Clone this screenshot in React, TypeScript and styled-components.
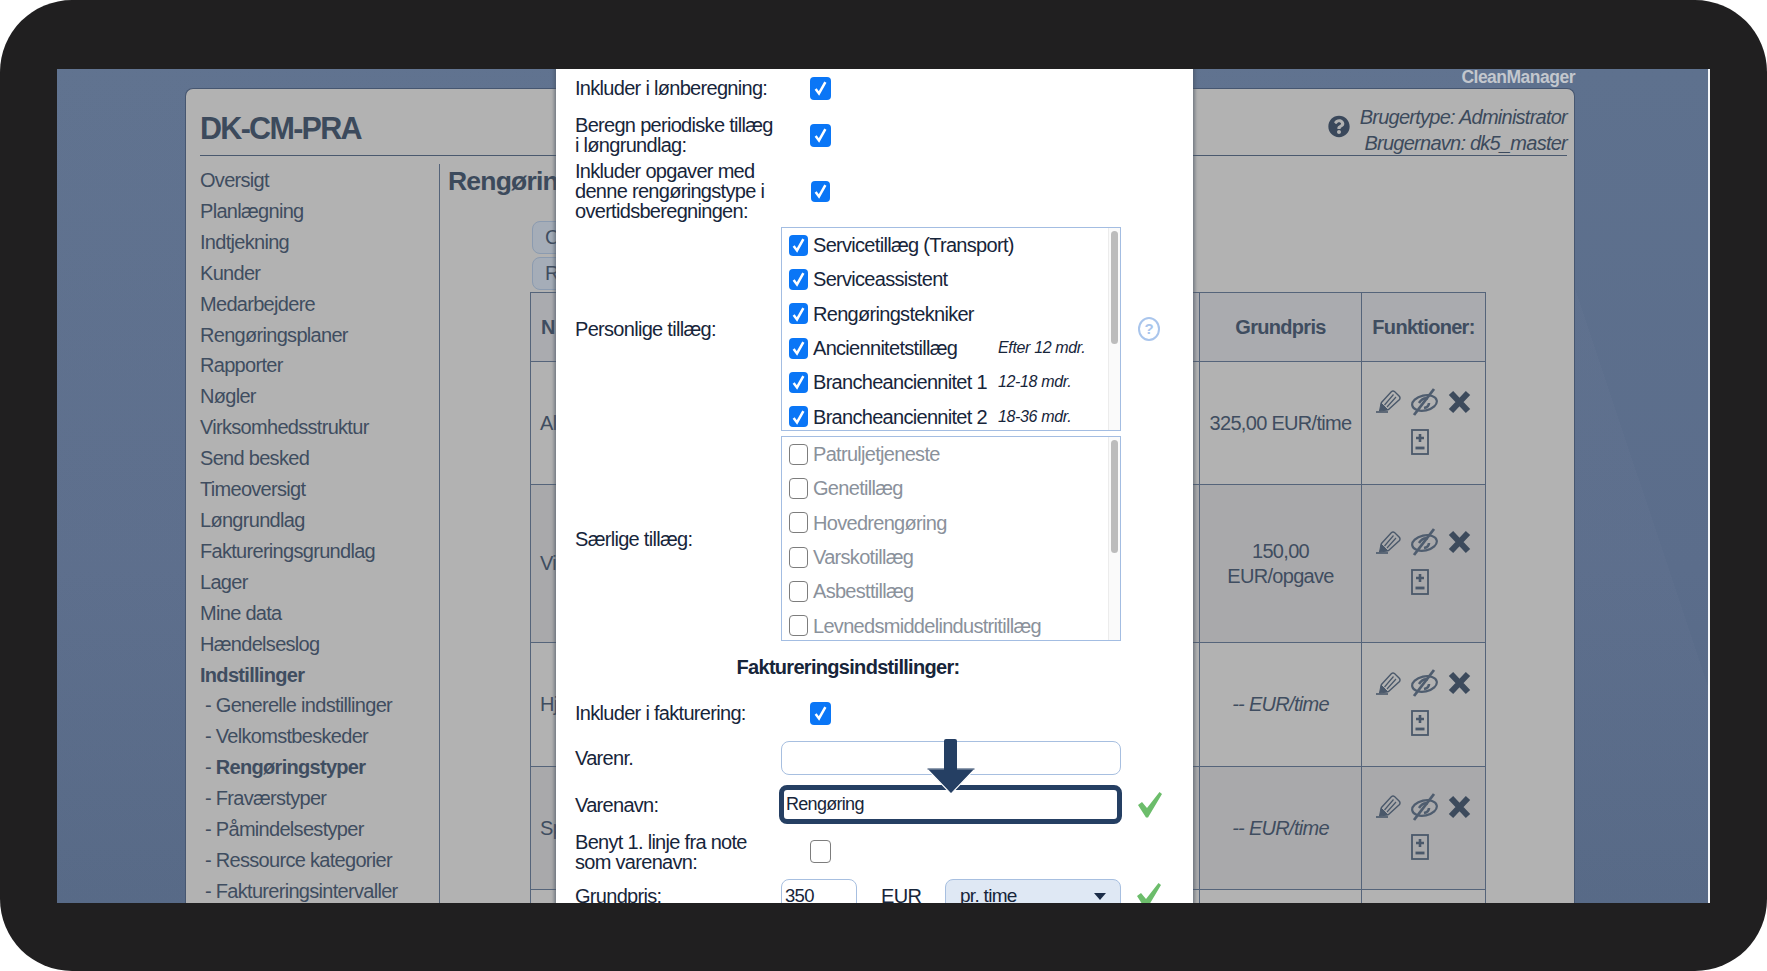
import React from 'react';
import styled, { createGlobalStyle } from 'styled-components';
import { FaQuestionCircle } from 'react-icons/fa';

const GlobalStyle = createGlobalStyle`
  html, body {
    margin: 0;
    padding: 0;
    background: #fff;
  }
  * {
    box-sizing: border-box;
  }
  body {
    font-family: "Liberation Sans", Arial, sans-serif;
    font-size: 20px;
    letter-spacing: -0.7px;
    line-height: 20px;
  }
`;

const Frame = styled.div`
  width: 1767px;
  height: 971px;
  padding: 69px 57px 68px;
  background: #201f20;
  border-radius: 72px;
  overflow: hidden;
`;

const Screen = styled.div`
  position: relative;
  height: 834px;
  overflow: hidden;
  border-right: 2px solid #f4f6f8;
  background:
    linear-gradient(71.5deg, rgba(255, 255, 255, 0.015) 0 89.3%, transparent 89.3%),
    linear-gradient(180deg, #5e718e 0%, #5b6d8b 60%, #556885 100%);
`;

const Column = styled.div`
  width: 1390px;
  margin-left: 128px;
`;

const Brand = styled.div`
  height: 19px;
  text-align: right;
  font-size: 17.5px;
  font-weight: 700;
  letter-spacing: -0.5px;
  line-height: 17px;
  color: #c3c7cd;
`;

const Panel = styled.div`
  height: 900px;
  padding: 0 7px 0 14px;
  background: #b2b2b2;
  border: 1px solid #465670;
  border-bottom: none;
  border-radius: 8px 8px 0 0;
`;

const Header = styled.header`
  display: flex;
  align-items: center;
  justify-content: space-between;
  height: 67px;
  border-bottom: 1px solid #4a596e;
`;

const SiteTitle = styled.h1`
  margin: 12px 0 0;
  font-size: 30.5px;
  letter-spacing: -1.7px;
  line-height: 34px;
  color: #3c4a5c;
`;

const UserBlock = styled.div`
  display: flex;
  align-items: center;
  gap: 10px;
  margin-top: 15px;
  color: #3c4a5c;
`;

const HelpDark = styled(FaQuestionCircle)`
  width: 22px;
  height: 23px;
  margin-top: -6px;
  color: #3a485b;
`;

const UserText = styled.div`
  text-align: right;
  font-style: italic;
  letter-spacing: -0.75px;
  line-height: 26px;
`;

const Body = styled.div`
  display: flex;
  margin-top: 9px;
`;

const Sidebar = styled.nav`
  flex: none;
  width: 240px;
  margin-top: -1px;
  padding-top: 1px;
  border-right: 1px solid #55647a;
`;

const NavItem = styled.div<{ $bold?: boolean; $sub?: boolean }>`
  height: 30.92px;
  padding-left: ${p => (p.$sub ? 5 : 0)}px;
  line-height: 31px;
  font-weight: ${p => (p.$bold ? 700 : 400)};
  color: #3f4d60;
  white-space: nowrap;
`;

const NavBold = styled.span`
  font-weight: 700;
`;

const Main = styled.main`
  flex: 1;
  padding-left: 8px;
`;

const PageTitle = styled.h2`
  margin: 0;
  height: 56px;
  font-size: 26.5px;
  letter-spacing: -0.8px;
  line-height: 32px;
  color: #3c4a5c;
`;

const TabButton = styled.div`
  width: 140px;
  height: 33px;
  margin: 0 0 3px 84px;
  padding-left: 12px;
  border: 1px solid #8b9bb0;
  border-radius: 8px;
  background: #a5adb8;
  line-height: 31px;
  color: #3f4d60;
`;

const Table = styled.table`
  width: 955px;
  margin: -1px 0 0 82px;
  table-layout: fixed;
  border-collapse: collapse;
  color: #3f4d60;
`;

const HeadCell = styled.th<{ $w: number; $left?: boolean }>`
  width: ${p => p.$w}px;
  height: 69px;
  padding: 0 ${p => (p.$left ? 10 : 0)}px;
  text-align: ${p => (p.$left ? 'left' : 'center')};
  border: 1px solid #55647a;
  background: #aaabaf;
`;

const Row = styled.tr<{ $h: number; $dark?: boolean }>`
  height: ${p => p.$h}px;
  background: ${p => (p.$dark ? '#a9a9ab' : '#b2b2b2')};
`;

const Cell = styled.td<{ $left?: boolean; $dim?: boolean }>`
  padding: 0 ${p => (p.$left ? 9 : 8)}px;
  text-align: ${p => (p.$left ? 'left' : 'center')};
  font-style: ${p => (p.$dim ? 'italic' : 'normal')};
  line-height: 25px;
  border: 1px solid #55647a;
`;

const ActionRow = styled.div`
  display: flex;
  align-items: center;
  justify-content: center;
  gap: 10px;
  height: 30px;
`;

const ActionRowSecond = styled(ActionRow)`
  margin: 10px 8px 3px 0;
`;

const Modal = styled.section`
  position: absolute;
  top: 0;
  left: 499px;
  width: 637px;
  height: 834px;
  overflow: hidden;
  background: #fff;
  color: #17253a;
  box-shadow: 0 0 3px 2px rgba(70, 80, 95, 0.55);
`;

const FormRow = styled.div<{ $h: number; $top?: number }>`
  display: flex;
  align-items: center;
  flex: none;
  height: ${p => p.$h}px;
  margin-top: ${p => p.$top ?? 0}px;
  padding-left: 19px;
`;

const FieldLabel = styled.div`
  flex: none;
  width: 206px;
`;

const Box = styled.span<{ $on?: boolean; $small?: boolean }>`
  display: flex;
  align-items: center;
  justify-content: center;
  flex: none;
  width: ${p => (p.$small ? 19 : 21)}px;
  height: ${p => (p.$small ? 21 : 23)}px;
  border-radius: 4px;
  background: ${p => (p.$on ? '#0a76f6' : '#fff')};
  border: ${p => (p.$on ? 'none' : '1.5px solid #7d7d7d')};
`;

const BoxSlot = styled.div<{ $small?: boolean }>`
  margin-left: ${p => (p.$small ? 30 : 29)}px;
`;

const ListBox = styled.div`
  position: relative;
  flex: none;
  width: 340px;
  height: 100%;
  overflow: hidden;
  border: 1px solid #a3bde2;
`;

const ListItem = styled.div<{ $off?: boolean }>`
  display: flex;
  align-items: center;
  gap: 5px;
  height: 34.3px;
  padding-left: 7px;
  color: ${p => (p.$off ? '#8a919b' : '#17253a')};
  white-space: nowrap;
`;

const ListName = styled.span`
  flex: none;
  width: 180px;
`;

const ListNote = styled.span`
  font-size: 16px;
  font-style: italic;
  letter-spacing: -0.35px;
`;

const ScrollTrack = styled.div`
  position: absolute;
  top: 0;
  right: 0;
  bottom: 0;
  width: 12px;
  background: #fafafa;
  border-left: 1px solid #ececec;
`;

const ScrollThumb = styled.div`
  width: 7px;
  height: 113px;
  margin: 3px 0 0 2px;
  border-radius: 4px;
  background: #bcbcbc;
`;

const Hint = styled.div`
  display: flex;
  align-items: center;
  justify-content: center;
  width: 22px;
  height: 24px;
  margin-left: 17px;
  border: 2px solid #a9c5ec;
  border-radius: 50%;
  font-size: 15px;
  font-weight: 700;
  letter-spacing: 0;
  color: #a9c5ec;
`;

const SectionTitle = styled.div`
  height: 52px;
  padding-right: 53px;
  line-height: 52px;
  text-align: center;
  font-weight: 700;
`;

const TextBox = styled.div<{ $w?: number }>`
  flex: none;
  width: ${p => p.$w ?? 340}px;
  height: 34px;
  padding-left: 3px;
  border: 1.5px solid #a7bfe0;
  border-radius: 8px;
  font-size: 18.5px;
  line-height: 32px;
`;

const ActiveBox = styled.div`
  flex: none;
  width: 343px;
  height: 39px;
  margin-left: -2px;
  padding-left: 2px;
  border: 5px solid #253f63;
  border-radius: 8px;
  font-size: 18px;
  line-height: 29px;
`;

const Tick = styled.svg`
  flex: none;
  width: 24px;
  height: 26px;
  margin-left: 16px;
`;

const Currency = styled.span`
  margin-left: 24px;
  width: 64px;
`;

const SelectBox = styled.div`
  display: flex;
  align-items: center;
  justify-content: space-between;
  flex: none;
  width: 176px;
  height: 34px;
  padding: 0 14px 0 14px;
  border: 1.5px solid #a7bfe0;
  border-radius: 8px;
  background: #dfe8f4;
  font-size: 19px;
`;

const Caret = styled.i`
  width: 0;
  height: 0;
  border-left: 6px solid transparent;
  border-right: 6px solid transparent;
  border-top: 7px solid #1c2d47;
`;

const PointerArrow = styled.svg`
  position: absolute;
  top: 670px;
  left: 870px;
  width: 48px;
  height: 56px;
`;

const IconPencil = () => (
  <svg width="25" height="23" viewBox="0 0 25 23" fill="none" stroke="#4a586a">
    <path d="M0 22H12" strokeWidth="1.6" />
    <path d="M3.5 21L5 13L12 20Z" fill="#4a586a" strokeWidth="1" />
    <path d="M5 13L15.5 1.5Q17 0.5 18.5 1.5L23.5 6.5Q24.5 8 23.5 9.5L12 20" strokeWidth="1.4" />
    <path d="M8.5 15L17.5 4.5M11 17L20 7" strokeWidth="1.2" />
  </svg>
);

const IconEyeOff = () => (
  <svg width="27" height="28" viewBox="0 0 27 28" fill="none" stroke="#4f5d6f">
    <ellipse cx="13.5" cy="15" rx="12.5" ry="7.5" transform="rotate(-12 13.5 15)" strokeWidth="2.2" />
    <path d="M8 15Q12 9 17 10.5" strokeWidth="2.6" />
    <path d="M18 15Q18 19 13 20" strokeWidth="2.6" />
    <path d="M3 27L23 1" strokeWidth="2.8" />
  </svg>
);

const IconCross = () => (
  <svg width="23" height="24" viewBox="0 0 23 24" fill="none" stroke="#3c4a5c">
    <path d="M3 3L20 21M20 3L3 21" strokeWidth="6" />
  </svg>
);

const IconSheet = () => (
  <svg width="18" height="26" viewBox="0 0 18 26" fill="none" stroke="#4a586a">
    <rect x="1" y="1" width="16" height="24" strokeWidth="1.8" />
    <path d="M9 5V13M5 9H13" strokeWidth="2.6" />
    <path d="M4.5 19H13.5" strokeWidth="2.8" />
  </svg>
);

const Actions = () => (
  <>
    <ActionRow>
      <IconPencil />
      <IconEyeOff />
      <IconCross />
    </ActionRow>
    <ActionRowSecond>
      <IconSheet />
    </ActionRowSecond>
  </>
);

const CheckBox: React.FC<{ on?: boolean; small?: boolean }> = ({ on, small }) => (
  <Box $on={on} $small={small}>
    {on && (
      <svg width="13" height="16" viewBox="0 0 12 14" fill="none">
        <path d="M1.5 8L4.6 12L10.5 1.5" stroke="#fff" strokeWidth="2.3" />
      </svg>
    )}
  </Box>
);

const GreenTick = () => (
  <Tick viewBox="0 0 24 26">
    <path d="M0 13L4 10L9 16L21.5 0L24 2L10 25.5H8Z" fill="#6cbd6b" />
  </Tick>
);

const mainNav = [
  'Oversigt', 'Planlægning', 'Indtjekning', 'Kunder', 'Medarbejdere', 'Rengøringsplaner',
  'Rapporter', 'Nøgler', 'Virksomhedsstruktur', 'Send besked', 'Timeoversigt', 'Løngrundlag',
  'Faktureringsgrundlag', 'Lager', 'Mine data', 'Hændelseslog',
];

const subNav = [
  'Generelle indstillinger', 'Velkomstbeskeder', 'Rengøringstyper', 'Fraværstyper',
  'Påmindelsestyper', 'Ressource kategorier', 'Faktureringsintervaller',
];

const personal = [
  ['Servicetillæg (Transport)', ''],
  ['Serviceassistent', ''],
  ['Rengøringstekniker', ''],
  ['Anciennitetstillæg', 'Efter 12 mdr.'],
  ['Brancheanciennitet 1', '12-18 mdr.'],
  ['Brancheanciennitet 2', '18-36 mdr.'],
];

const special = ['Patruljetjeneste', 'Genetillæg', 'Hovedrengøring', 'Varskotillæg', 'Asbesttillæg', 'Levnedsmiddelindustritillæg'];

const App: React.FC = () => {
  return (
    <Frame>
      <GlobalStyle />
      <Screen>
        <Column>
          <Brand>CleanManager</Brand>
          <Panel>
            <Header>
              <SiteTitle>DK-CM-PRA</SiteTitle>
              <UserBlock>
                <HelpDark />
                <UserText>
                  Brugertype: Administrator
                  <br />
                  Brugernavn: dk5_master
                </UserText>
              </UserBlock>
            </Header>
            <Body>
              <Sidebar>
                {mainNav.map(item => (
                  <NavItem key={item}>{item}</NavItem>
                ))}
                <NavItem $bold>Indstillinger</NavItem>
                {subNav.map(item => (
                  <NavItem key={item} $sub>
                    - {item === 'Rengøringstyper' ? <NavBold>{item}</NavBold> : item}
                  </NavItem>
                ))}
              </Sidebar>
              <Main>
                <PageTitle>Rengørin</PageTitle>
                <TabButton>C</TabButton>
                <TabButton>R</TabButton>
                <Table>
                  <thead>
                    <tr>
                      <HeadCell $w={669} $left>N</HeadCell>
                      <HeadCell $w={162}>Grundpris</HeadCell>
                      <HeadCell $w={124}>Funktioner:</HeadCell>
                    </tr>
                  </thead>
                  <tbody>
                    <Row $h={123}>
                      <Cell $left>Al</Cell>
                      <Cell>325,00 EUR/time</Cell>
                      <Cell><Actions /></Cell>
                    </Row>
                    <Row $h={158} $dark>
                      <Cell $left>Vi</Cell>
                      <Cell>150,00<br />EUR/opgave</Cell>
                      <Cell><Actions /></Cell>
                    </Row>
                    <Row $h={124}>
                      <Cell $left>Hj</Cell>
                      <Cell $dim>-- EUR/time</Cell>
                      <Cell><Actions /></Cell>
                    </Row>
                    <Row $h={123} $dark>
                      <Cell $left>Sp</Cell>
                      <Cell $dim>-- EUR/time</Cell>
                      <Cell><Actions /></Cell>
                    </Row>
                    <Row $h={123}>
                      <Cell $left />
                      <Cell />
                      <Cell />
                    </Row>
                  </tbody>
                </Table>
              </Main>
            </Body>
          </Panel>
        </Column>

        <Modal>
          <FormRow $h={38}>
            <FieldLabel>Inkluder i lønberegning:</FieldLabel>
            <BoxSlot><CheckBox on /></BoxSlot>
          </FormRow>
          <FormRow $h={56}>
            <FieldLabel>Beregn periodiske tillæg<br />i løngrundlag:</FieldLabel>
            <BoxSlot><CheckBox on /></BoxSlot>
          </FormRow>
          <FormRow $h={56}>
            <FieldLabel>Inkluder opgaver med<br />denne rengøringstype i<br />overtidsberegningen:</FieldLabel>
            <BoxSlot $small><CheckBox on small /></BoxSlot>
          </FormRow>
          <FormRow $h={204} $top={8}>
            <FieldLabel>Personlige tillæg:</FieldLabel>
            <ListBox>
              {personal.map(([name, note]) => (
                <ListItem key={name}>
                  <CheckBox on small />
                  <ListName>{name}</ListName>
                  <ListNote>{note}</ListNote>
                </ListItem>
              ))}
              <ScrollTrack><ScrollThumb /></ScrollTrack>
            </ListBox>
            <Hint>?</Hint>
          </FormRow>
          <FormRow $h={205} $top={5}>
            <FieldLabel>Særlige tillæg:</FieldLabel>
            <ListBox>
              {special.map(name => (
                <ListItem key={name} $off>
                  <CheckBox small />
                  <ListName>{name}</ListName>
                </ListItem>
              ))}
              <ScrollTrack><ScrollThumb /></ScrollTrack>
            </ListBox>
          </FormRow>
          <SectionTitle>Faktureringsindstillinger:</SectionTitle>
          <FormRow $h={40}>
            <FieldLabel>Inkluder i fakturering:</FieldLabel>
            <BoxSlot><CheckBox on /></BoxSlot>
          </FormRow>
          <FormRow $h={34} $top={8}>
            <FieldLabel>Varenr.</FieldLabel>
            <TextBox />
          </FormRow>
          <FormRow $h={39} $top={10}>
            <FieldLabel>Varenavn:</FieldLabel>
            <ActiveBox>Rengøring</ActiveBox>
            <GreenTick />
          </FormRow>
          <FormRow $h={55}>
            <FieldLabel>Benyt 1. linje fra note<br />som varenavn:</FieldLabel>
            <BoxSlot><CheckBox /></BoxSlot>
          </FormRow>
          <FormRow $h={34}>
            <FieldLabel>Grundpris:</FieldLabel>
            <TextBox $w={76}>350</TextBox>
            <Currency>EUR</Currency>
            <SelectBox>pr. time<Caret /></SelectBox>
            <GreenTick />
          </FormRow>
        </Modal>

        <PointerArrow viewBox="0 0 48 56">
          <path d="M0 30H48L24 55Z" fill="#253f63" stroke="#fff" strokeWidth="1.2" />
          <path d="M17 2Q17 0 19 0H28Q30 0 30 2V31H17Z" fill="#253f63" />
          <path d="M0.5 30H47.5" stroke="#253f63" strokeWidth="1.2" />
        </PointerArrow>
      </Screen>
    </Frame>
  );
};

export default App;
